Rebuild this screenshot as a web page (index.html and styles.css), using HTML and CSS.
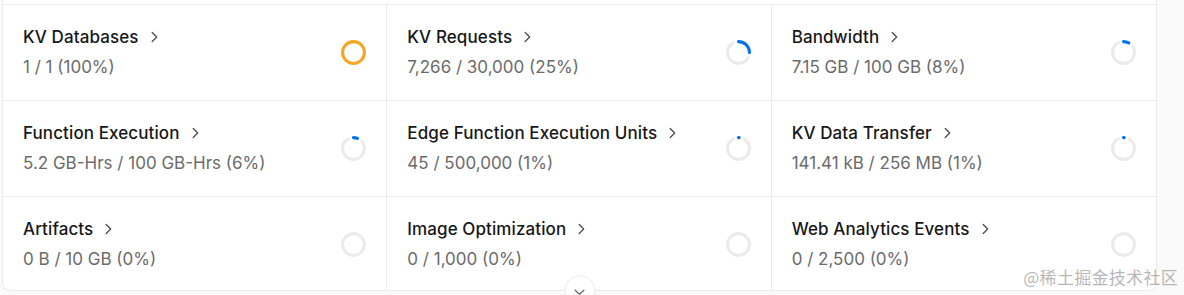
FILE: index.html
```html
<!DOCTYPE html>
<html lang="en">
<head>
<meta charset="utf-8">
<title>Usage</title>
<link rel="stylesheet" href="styles.css">
</head>
<body>
<div class="page">
  <div class="card">
    <div class="grid">
      <a class="cell" href="#">
        <div class="info">
          <div class="title">KV Databases <svg class="chev" viewBox="0 0 16 16"><path d="M6.2 3.5L10.7 8L6.2 12.5"/></svg></div>
          <div class="value">1 / 1 (100%)</div>
        </div>
        <svg class="gauge" viewBox="0 0 24 24"><circle class="arc full" cx="12" cy="12" r="10.5" pathLength="100"/></svg>
      </a>
      <a class="cell" href="#">
        <div class="info">
          <div class="title">KV Requests <svg class="chev" viewBox="0 0 16 16"><path d="M6.2 3.5L10.7 8L6.2 12.5"/></svg></div>
          <div class="value">7,266 / 30,000 (25%)</div>
        </div>
        <svg class="gauge" viewBox="0 0 24 24"><circle class="track" cx="12" cy="12" r="10.5" pathLength="100" style="stroke-dasharray: 59 100; stroke-dashoffset: -33"/><circle class="arc" cx="12" cy="12" r="10.5" pathLength="100" style="stroke-dasharray: 25 100"/></svg>
      </a>
      <a class="cell" href="#">
        <div class="info">
          <div class="title">Bandwidth <svg class="chev" viewBox="0 0 16 16"><path d="M6.2 3.5L10.7 8L6.2 12.5"/></svg></div>
          <div class="value">7.15 GB / 100 GB (8%)</div>
        </div>
        <svg class="gauge" viewBox="0 0 24 24"><circle class="track" cx="12" cy="12" r="10.5" pathLength="100" style="stroke-dasharray: 76 100; stroke-dashoffset: -16"/><circle class="arc" cx="12" cy="12" r="10.5" pathLength="100" style="stroke-dasharray: 8 100"/></svg>
      </a>
      <a class="cell" href="#">
        <div class="info">
          <div class="title">Function Execution <svg class="chev" viewBox="0 0 16 16"><path d="M6.2 3.5L10.7 8L6.2 12.5"/></svg></div>
          <div class="value">5.2 GB-Hrs / 100 GB-Hrs (6%)</div>
        </div>
        <svg class="gauge" viewBox="0 0 24 24"><circle class="track" cx="12" cy="12" r="10.5" pathLength="100" style="stroke-dasharray: 78 100; stroke-dashoffset: -14"/><circle class="arc" cx="12" cy="12" r="10.5" pathLength="100" style="stroke-dasharray: 6 100"/></svg>
      </a>
      <a class="cell" href="#">
        <div class="info">
          <div class="title">Edge Function Execution Units <svg class="chev" viewBox="0 0 16 16"><path d="M6.2 3.5L10.7 8L6.2 12.5"/></svg></div>
          <div class="value">45 / 500,000 (1%)</div>
        </div>
        <svg class="gauge" viewBox="0 0 24 24"><circle class="track" cx="12" cy="12" r="10.5" pathLength="100" style="stroke-dasharray: 83 100; stroke-dashoffset: -9"/><circle class="arc" cx="12" cy="12" r="10.5" pathLength="100" style="stroke-dasharray: 1 100"/></svg>
      </a>
      <a class="cell" href="#">
        <div class="info">
          <div class="title">KV Data Transfer <svg class="chev" viewBox="0 0 16 16"><path d="M6.2 3.5L10.7 8L6.2 12.5"/></svg></div>
          <div class="value">141.41 kB / 256 MB (1%)</div>
        </div>
        <svg class="gauge" viewBox="0 0 24 24"><circle class="track" cx="12" cy="12" r="10.5" pathLength="100" style="stroke-dasharray: 83 100; stroke-dashoffset: -9"/><circle class="arc" cx="12" cy="12" r="10.5" pathLength="100" style="stroke-dasharray: 1 100"/></svg>
      </a>
      <a class="cell" href="#">
        <div class="info">
          <div class="title">Artifacts <svg class="chev" viewBox="0 0 16 16"><path d="M6.2 3.5L10.7 8L6.2 12.5"/></svg></div>
          <div class="value">0 B / 10 GB (0%)</div>
        </div>
        <svg class="gauge" viewBox="0 0 24 24"><circle class="track" cx="12" cy="12" r="10.5"/></svg>
      </a>
      <a class="cell" href="#">
        <div class="info">
          <div class="title">Image Optimization <svg class="chev" viewBox="0 0 16 16"><path d="M6.2 3.5L10.7 8L6.2 12.5"/></svg></div>
          <div class="value">0 / 1,000 (0%)</div>
        </div>
        <svg class="gauge" viewBox="0 0 24 24"><circle class="track" cx="12" cy="12" r="10.5"/></svg>
      </a>
      <a class="cell" href="#">
        <div class="info">
          <div class="title">Web Analytics Events <svg class="chev" viewBox="0 0 16 16"><path d="M6.2 3.5L10.7 8L6.2 12.5"/></svg></div>
          <div class="value">0 / 2,500 (0%)</div>
        </div>
        <svg class="gauge" viewBox="0 0 24 24"><circle class="track" cx="12" cy="12" r="10.5"/></svg>
      </a>
    </div>
    <button class="more" type="button" aria-label="Show more"><svg viewBox="0 0 16 16"><path d="M3 6L8 10.5L13 6"/></svg></button>
  </div>
  <div class="watermark">@稀土掘金技术社区</div>
</div>
</body>
</html>
```

FILE: styles.css
```css
html, body {
  margin: 0;
  padding: 0;
  height: 100%;
  overflow: hidden;
  background: #fafafa;
}

body {
  font-family: Inter, "Noto Sans", "Liberation Sans", sans-serif;
  -webkit-font-smoothing: antialiased;
}

.page {
  position: relative;
  height: 295px;
  padding-left: 2px;
  box-sizing: border-box;
}

.card {
  position: relative;
  width: 1155px;
  box-sizing: border-box;
  background: #fff;
  border: 1px solid #ebebeb;
  border-top: 0;
  border-radius: 0 0 8px 8px;
  padding-top: 4px;
}

.grid {
  display: grid;
  grid-template-columns: repeat(3, 1fr);
  border-top: 1px solid #ebebeb;
}

.cell {
  display: flex;
  align-items: center;
  justify-content: space-between;
  padding: 20px 20px 21px 20px;
  border-right: 1px solid #ebebeb;
  border-bottom: 1px solid #ebebeb;
  text-decoration: none;
  color: inherit;
  min-width: 0;
}

.cell:nth-child(3n) {
  border-right: 0;
}

.cell:nth-last-child(-n+3) {
  border-bottom: 0;
  padding-bottom: 19px;
}

.info {
  display: flex;
  flex-direction: column;
  gap: 6px;
}

.title {
  display: flex;
  align-items: center;
  gap: 7px;
  font-size: 17px;
  line-height: 24px;
  font-weight: 500;
  color: #171717;
  letter-spacing: 0.1px;
}

.chev {
  width: 16px;
  height: 16px;
  fill: none;
  stroke: #4d4d4d;
  stroke-width: 1.3;
  stroke-linecap: round;
  stroke-linejoin: round;
}

.value {
  font-size: 17px;
  line-height: 24px;
  color: #6b6b6b;
}

.gauge {
  width: 25px;
  height: 25px;
  flex-shrink: 0;
  transform: rotate(-90deg);
}

.gauge circle {
  fill: none;
  stroke-width: 3;
  stroke-linecap: round;
}

.gauge .track {
  stroke: #ebebeb;
}

.gauge .arc {
  stroke: #0070f3;
}

.gauge .arc.full {
  stroke: #f5a623;
}

.more {
  position: absolute;
  left: 50%;
  bottom: -16px;
  transform: translateX(-50%);
  width: 31px;
  height: 31px;
  padding: 0;
  border-radius: 50%;
  border: 1px solid #ebebeb;
  background: #fff;
  display: flex;
  align-items: flex-start;
  justify-content: center;
  cursor: pointer;
}

.more svg {
  width: 14px;
  height: 14px;
  margin-top: 9px;
  fill: none;
  stroke: #666;
  stroke-width: 1.4;
  stroke-linecap: round;
  stroke-linejoin: round;
}

.watermark {
  position: absolute;
  right: 6px;
  bottom: 6px;
  font-family: "Noto Sans CJK SC", "Noto Sans", sans-serif;
  font-size: 17px;
  line-height: 24px;
  color: rgba(110, 110, 110, 0.5);
  letter-spacing: 0.3px;
}
```
